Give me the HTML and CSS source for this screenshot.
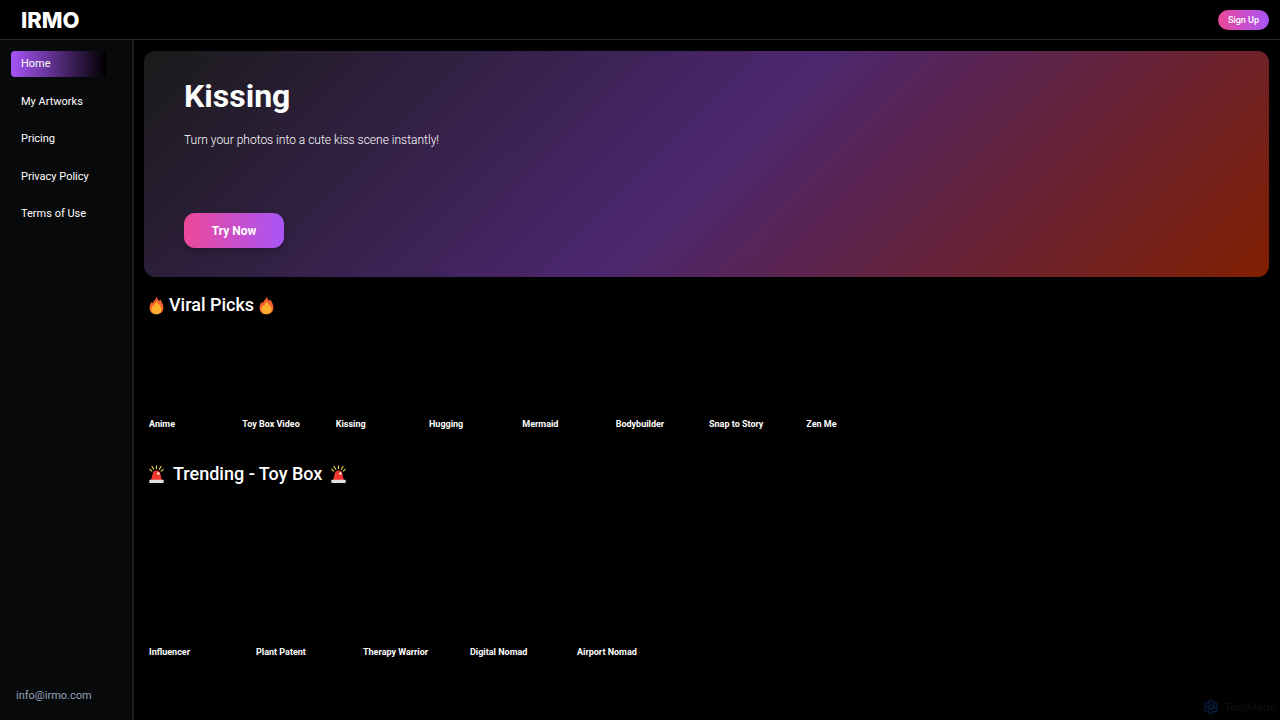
FILE: index.html
```
<!DOCTYPE html>
<html lang="en">
<head>
    <meta charset="UTF-8">
    <meta name="viewport" content="width=device-width, initial-scale=1.0">
    <title>IRMO</title>
    <link rel="stylesheet" href="styles.css">
</head>
<body>
    <!-- Shared icon shapes -->
    <svg class="icon-defs" aria-hidden="true">
        <symbol id="fire" viewBox="0 0 16 20">
            <path fill="#f4602c" d="M8.4.6c.5 2 1.5 3.300 2.500 4.600l1-1.800c1.800 2.600 3.500 5.600 3.500 9 0 4.300-3 7-7.400 7S.6 16.700.6 12.600c0-2.800 1-4.800 2.600-6.600l.8 1.800C5 4.800 7.300 3.300 8.400.6z"/>
            <path fill="#ffae2e" d="M8.300 5.800c.6 1.700 2 2.800 3.300 4.300 1.100 1.300 1.900 2.700 1.900 4.200 0 3-2.200 4.900-5.400 4.900s-5.700-1.900-5.700-5c0-1.800.8-3.300 1.900-4.600l1 1.200c.4-2.200 1.900-3.500 3-5z"/>
        </symbol>
        <symbol id="siren" viewBox="0 0 16 20">
            <path stroke="#f5d94e" stroke-width="1.200" stroke-linecap="round" d="M8 .8v2.800M3.200 1.400l1.800 3M12.800 1.400l-1.800 3M.8 4.600l2.200 1.800M15.200 4.600l-2.200 1.800"/>
            <path fill="#f0372f" d="M2.200 16 3.900 9.300C4.400 7 5.900 5.800 8 5.800s3.600 1.200 4.100 3.500L13.800 16z"/>
            <circle cx="10" cy="9" r="1.300" fill="#fff0e8"/>
            <rect x=".4" y="15.600" width="15.200" height="3.400" rx=".6" fill="#dfe1e3"/>
        </symbol>
    </svg>

    <header class="topbar">
        <a href="#" class="logo">IRMO</a>
        <button type="button" class="signup">Sign Up</button>
    </header>

    <div class="layout">
        <aside class="sidebar">
            <nav class="menu">
                <a href="#" class="active">Home</a>
                <a href="#">My Artworks</a>
                <a href="#">Pricing</a>
                <a href="#">Privacy Policy</a>
                <a href="#">Terms of Use</a>
            </nav>
            <a href="mailto:info@irmo.com" class="contact">info@irmo.com</a>
        </aside>

        <main class="content">
            <section class="hero">
                <h1>Kissing</h1>
                <p>Turn your photos into a cute kiss scene instantly!</p>
                <button type="button" class="try">Try Now</button>
            </section>

            <section class="section">
                <h2>
                    <svg class="emoji"><use href="#fire"/></svg>
                    Viral Picks
                    <svg class="emoji"><use href="#fire"/></svg>
                </h2>
                <div class="cards picks">
                    <a href="#">Anime</a>
                    <a href="#">Toy Box Video</a>
                    <a href="#">Kissing</a>
                    <a href="#">Hugging</a>
                    <a href="#">Mermaid</a>
                    <a href="#">Bodybuilder</a>
                    <a href="#">Snap to Story</a>
                    <a href="#" class="inset">Zen Me</a>
                </div>
            </section>

            <section class="section">
                <h2 class="wide">
                    <svg class="emoji"><use href="#siren"/></svg>
                    Trending - Toy Box
                    <svg class="emoji"><use href="#siren"/></svg>
                </h2>
                <div class="cards toybox">
                    <a href="#">Influencer</a>
                    <a href="#">Plant Patent</a>
                    <a href="#">Therapy Warrior</a>
                    <a href="#">Digital Nomad</a>
                    <a href="#">Airport Nomad</a>
                </div>
            </section>
        </main>
    </div>

    <div class="badge">
        <svg viewBox="0 0 16 16" fill="none" stroke="#081c40" stroke-width="1.200">
            <path d="M8 1l6 3.500v7L8 15l-6-3.500v-7z"/>
            <circle cx="8" cy="8" r="2"/>
            <path d="M8 1c3 2 4 4 2 7M14 4.500c0 4-2 5-5 5M14 11.500c-3 2-5 1-6-1.500M8 15c-3-2-4-4-2-7M2 11.500c0-4 2-5 5-5M2 4.500c3-2 5-1 6 1.500"/>
        </svg>
        <span>ToolMage</span>
    </div>
</body>
</html>
```
FILE: styles.css
```
* {
    box-sizing: border-box;
}

body {
    margin: 0;
    min-height: 100vh;
    display: flex;
    flex-direction: column;
    background: #000;
    color: #fff;
    font-family: Roboto, sans-serif;
    font-size: 11px;
}

a {
    color: inherit;
    text-decoration: none;
}

button {
    border: none;
    color: #fff;
    font-family: inherit;
    background: linear-gradient(90deg, #ec4899, #a855f7);
    cursor: pointer;
}

h1, h2, p {
    margin: 0;
}

.icon-defs {
    display: none;
}

/* Top bar */
.topbar {
    display: flex;
    align-items: center;
    justify-content: space-between;
    height: 40px;
    padding: 0 11px 0 21px;
    border-bottom: 1px solid #27272a;
}

.logo {
    font-family: Inter, sans-serif;
    font-size: 22px;
    font-weight: 800;
}

.signup {
    height: 20px;
    padding: 0 10px;
    border-radius: 10px;
    font-size: 9px;
    font-weight: 500;
}

.layout {
    flex: 1;
    display: flex;
}

/* Sidebar */
.sidebar {
    width: 134px;
    display: flex;
    flex-direction: column;
    justify-content: space-between;
    padding: 11px 26px 16px 11px;
    background: #08090b;
    border-right: 2px solid #1c1d20;
}

.menu {
    display: flex;
    flex-direction: column;
    justify-content: space-between;
    height: 176px;
}

.menu a {
    padding: 0 10px;
    line-height: 26px;
    border-radius: 4px;
}

.menu .active {
    background: linear-gradient(90deg, #a855f7, #000);
}

.contact {
    padding-left: 5px;
    line-height: 16px;
    color: #94a3b8;
}

/* Content */
.content {
    flex: 1;
    padding: 11px 11px 0 10px;
}

.hero {
    display: flex;
    flex-direction: column;
    align-items: flex-start;
    height: 226px;
    padding: 25px 40px 29px;
    border-radius: 11px;
    background: linear-gradient(135deg, #1a1a1a 0%, #4c2770 50%, #801e00 100%);
}

.hero h1 {
    font-size: 32px;
    line-height: 40px;
}

.hero p {
    margin-top: 15px;
    font-size: 12px;
    line-height: 18px;
    font-weight: 300;
}

.try {
    margin-top: auto;
    width: 100px;
    height: 35px;
    border-radius: 11px;
    font-size: 12px;
    font-weight: 700;
    box-shadow: 0 4px 8px rgba(0, 0, 0, 0.2);
}

.section {
    padding: 14px 0 0 5px;
}

.section h2 {
    display: flex;
    align-items: center;
    gap: 5px;
    font-size: 18px;
    line-height: 28px;
    font-weight: 500;
}

.section h2.wide {
    gap: 9px;
}

.emoji {
    width: 15px;
    height: 19px;
}

.cards {
    display: grid;
    align-items: end;
    font-size: 9px;
    font-weight: 700;
    line-height: 14px;
}

.picks {
    grid-template-columns: repeat(12, 1fr);
    height: 112px;
    margin-bottom: 15px;
}

.picks .inset {
    padding-left: 4px;
}

.toybox {
    grid-template-columns: repeat(5, 107px);
    height: 171px;
}

/* Floating badge */
.badge {
    position: fixed;
    right: 4px;
    bottom: 4px;
    display: flex;
    align-items: center;
    gap: 5px;
    font-family: Inter, sans-serif;
    font-size: 11px;
    font-weight: 500;
    line-height: 18px;
    color: #0e0e11;
}

.badge svg {
    width: 16px;
    height: 16px;
}
```
